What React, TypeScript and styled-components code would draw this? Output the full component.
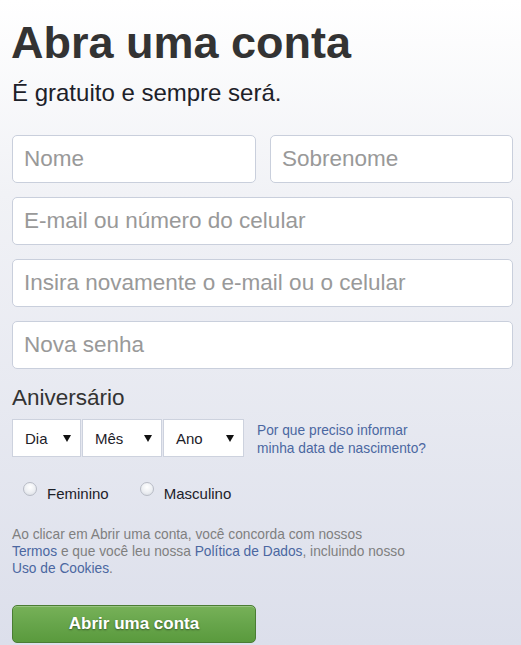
import styled, { createGlobalStyle } from "styled-components";

const GlobalStyle = createGlobalStyle`
  html, body {
    margin: 0;
    padding: 0;
  }
  body {
    font-family: "Liberation Sans", Arial, sans-serif;
    background: #fff;
  }
`;

const Page = styled.div`
  width: 521px;
  height: 645px;
  box-sizing: border-box;
  padding: 20px 8px 0 12px;
  background: linear-gradient(to bottom, #ffffff 0%, #f1f2f6 30%, #dcdfeb 100%);
  overflow: hidden;
`;

const Title = styled.h1`
  margin: 0 0 14px -1px;
  font-size: 45px;
  line-height: 45px;
  font-weight: bold;
  color: #333;
`;

const Subtitle = styled.p`
  margin: 0 0 28px;
  font-size: 24px;
  line-height: 28px;
  color: #1d2129;
`;

const Fields = styled.div`
  display: grid;
  grid-template-columns: 244px 243px;
  column-gap: 14px;
  row-gap: 14px;
`;

const TextInput = styled.input<{ $wide?: boolean }>`
  grid-column: ${(p) => (p.$wide ? "1 / span 2" : "auto")};
  box-sizing: border-box;
  height: 48px;
  width: 100%;
  margin: 0;
  padding: 0 11px;
  border: 1px solid #c9cfdc;
  border-radius: 5px;
  background: #fff;
  font-family: "Liberation Sans", Arial, sans-serif;
  font-size: 22.5px;
  color: #1d2129;
  outline: none;

  &::placeholder {
    color: #999;
  }
`;

const SectionLabel = styled.div`
  margin: 16px 0 8px;
  font-size: 22.5px;
  line-height: 26px;
  color: #333;
`;

const BirthdayRow = styled.div`
  display: flex;
  align-items: flex-start;
`;

const Selects = styled.div`
  display: flex;
  gap: 1px;
`;

const SelectBox = styled.div<{ $width: number }>`
  box-sizing: border-box;
  width: ${(p) => p.$width}px;
  height: 38px;
  display: flex;
  align-items: center;
  justify-content: space-between;
  padding: 0 9px 0 12px;
  border: 1px solid #cdd2de;
  background: #fff;
  font-size: 15px;
  color: #1d2129;
`;

const Arrow = () => (
  <svg width="8" height="7" viewBox="0 0 8 7">
    <path d="M0 0H8L4 7Z" fill="#111" />
  </svg>
);

const HelpLink = styled.a`
  margin: 3px 0 0 13px;
  font-size: 13.75px;
  line-height: 18px;
  color: #4b67a1;
  text-decoration: none;
`;

const GenderRow = styled.div`
  display: flex;
  align-items: flex-start;
  margin-top: 27px;
  font-size: 15px;
  line-height: 18px;
  color: #1d2129;
`;

const GenderOption = styled.label<{ $first?: boolean }>`
  display: flex;
  align-items: flex-start;
  margin-left: ${(p) => (p.$first ? 11 : 31)}px;
`;

const RadioDot = styled.span`
  box-sizing: border-box;
  width: 14px;
  height: 14px;
  margin: -3px 10px 0 0;
  border-radius: 50%;
  border: 1px solid #b8bcc6;
  background: radial-gradient(circle at 50% 35%, #ffffff 0%, #eceef2 55%, #d4d7de 100%);
`;

const Terms = styled.p`
  margin: 23px 0 0;
  font-size: 13.75px;
  line-height: 17px;
  color: #7f7f7f;
`;

const TermsLink = styled.a`
  color: #4b67a1;
  text-decoration: none;
`;

const SubmitButton = styled.button`
  display: block;
  box-sizing: border-box;
  width: 244px;
  height: 38px;
  margin-top: 28px;
  padding: 0;
  border: 1px solid #4a7d33;
  border-radius: 5px;
  background: linear-gradient(to bottom, #77b158 0%, #67a54b 50%, #5a9a3d 100%);
  box-shadow: inset 0 1px 0 rgba(255, 255, 255, 0.25);
  font-family: "Liberation Sans", Arial, sans-serif;
  font-size: 17px;
  font-weight: bold;
  color: #fff;
  text-shadow: 0 1px 2px rgba(0, 0, 0, 0.45);
  cursor: pointer;
`;

export default function App() {
  return (
    <>
      <GlobalStyle />
      <Page>
        <Title>Abra uma conta</Title>
        <Subtitle>É gratuito e sempre será.</Subtitle>

        <Fields>
          <TextInput placeholder="Nome" />
          <TextInput placeholder="Sobrenome" />
          <TextInput $wide placeholder="E-mail ou número do celular" />
          <TextInput $wide placeholder="Insira novamente o e-mail ou o celular" />
          <TextInput $wide type="password" placeholder="Nova senha" />
        </Fields>

        <SectionLabel>Aniversário</SectionLabel>
        <BirthdayRow>
          <Selects>
            <SelectBox $width={69}>
              Dia <Arrow />
            </SelectBox>
            <SelectBox $width={80}>
              Mês <Arrow />
            </SelectBox>
            <SelectBox $width={81}>
              Ano <Arrow />
            </SelectBox>
          </Selects>
          <HelpLink href="#">
            Por que preciso informar
            <br />
            minha data de nascimento?
          </HelpLink>
        </BirthdayRow>

        <GenderRow>
          <GenderOption $first>
            <RadioDot />
            Feminino
          </GenderOption>
          <GenderOption>
            <RadioDot />
            Masculino
          </GenderOption>
        </GenderRow>

        <Terms>
          Ao clicar em Abrir uma conta, você concorda com nossos
          <br />
          <TermsLink href="#">Termos</TermsLink> e que você leu nossa{" "}
          <TermsLink href="#">Política de Dados</TermsLink>, incluindo nosso
          <br />
          <TermsLink href="#">Uso de Cookies</TermsLink>.
        </Terms>

        <SubmitButton>Abrir uma conta</SubmitButton>
      </Page>
    </>
  );
}
